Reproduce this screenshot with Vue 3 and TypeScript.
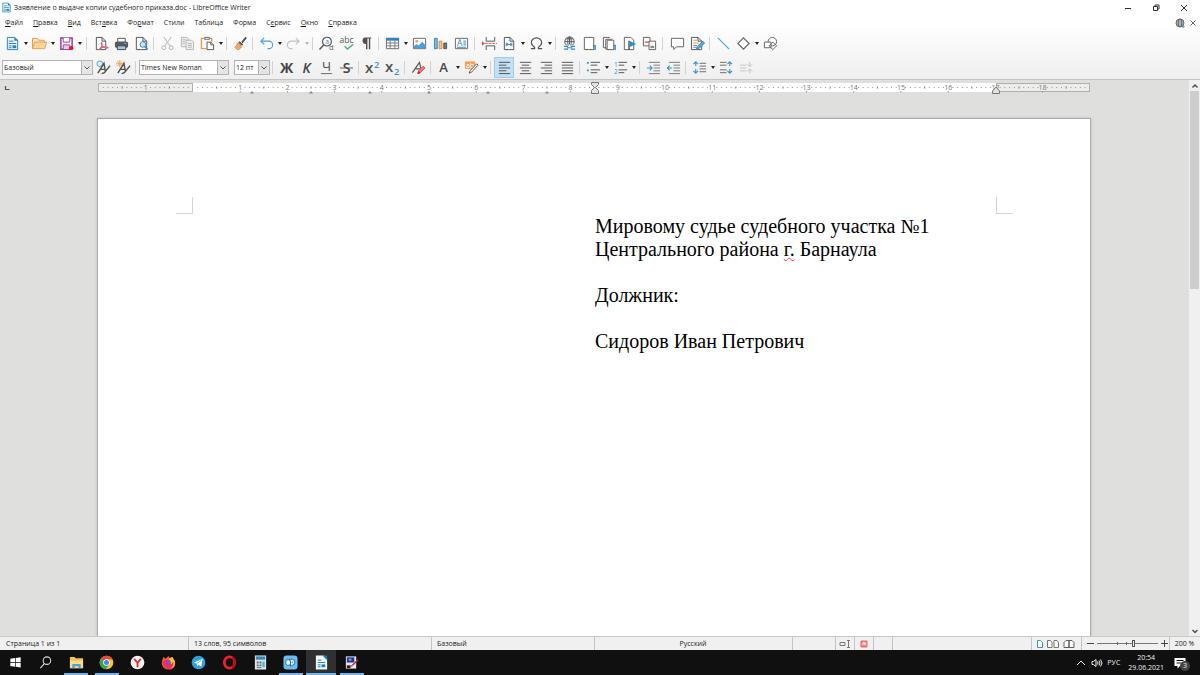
<script setup lang="ts">
import { ref } from 'vue'

interface Tool {
  icon: string
  label: string
  menu?: boolean
  active?: boolean
}
interface ToolGroup {
  tools: Tool[]
  wide?: boolean
  airy?: boolean
}

const menus: [string, string, string][] = [
  ['', 'Ф', 'айл'],
  ['', 'П', 'равка'],
  ['', 'В', 'ид'],
  ['Вст', 'а', 'вка'],
  ['Фо', 'р', 'мат'],
  ['Стили', '', ''],
  ['Таблица', '', ''],
  ['Форма', '', ''],
  ['С', 'е', 'рвис'],
  ['', 'О', 'кно'],
  ['', 'С', 'правка'],
]

const t = (icon: string, label: string, menu = false, active = false): Tool => ({ icon, label, menu, active })

const standardBar: ToolGroup[] = [
  { wide: true, tools: [t('doc', 'Создать', true), t('folder', 'Открыть', true), t('save', 'Сохранить', true)] },
  { tools: [t('pdf', 'Экспорт в PDF'), t('print', 'Печать'), t('preview', 'Просмотр печати')] },
  { tools: [t('cut', 'Вырезать'), t('copy', 'Копировать'), t('paste', 'Вставить', true)] },
  { tools: [t('brush', 'Копировать форматирование')] },
  { tools: [t('undo', 'Отменить', true), t('redo', 'Вернуть', true)] },
  { tools: [t('find', 'Найти и заменить'), t('spell', 'Орфография'), t('pilcrow', 'Непечатаемые знаки')] },
  { airy: true, wide: true, tools: [t('table', 'Вставить таблицу', true), t('image', 'Вставить изображение'), t('chart', 'Вставить диаграмму'), t('textbox', 'Вставить текстовое поле')] },
  { tools: [t('pagebreak', 'Разрыв страницы'), t('field', 'Вставить поле', true), t('omega', 'Специальные символы', true)] },
  { wide: true, tools: [t('link', 'Гиперссылка'), t('footnote', 'Сноска'), t('endnote', 'Концевая сноска'), t('bookmark', 'Закладка'), t('xref', 'Перекрёстная ссылка')] },
  { tools: [t('comment', 'Комментарий'), t('track', 'Отслеживать изменения')] },
  { tools: [t('line', 'Линия'), t('diamond', 'Фигуры', true), t('shapes', 'Показать функции рисования')] },
]

const formatBar: ToolGroup[] = [
  { tools: [t('bold', 'Полужирный'), t('italic', 'Курсив'), t('underline', 'Подчёркнутый'), t('strike', 'Зачёркнутый')] },
  { tools: [t('sup', 'Верхний индекс'), t('sub', 'Нижний индекс')] },
  { tools: [t('clear', 'Очистить форматирование')] },
  { tools: [t('color', 'Цвет шрифта', true), t('highlight', 'Цвет выделения', true)] },
  { airy: true, tools: [t('left', 'По левому краю', false, true), t('center', 'По центру'), t('right', 'По правому краю'), t('justify', 'По ширине')] },
  { tools: [t('bullets', 'Маркированный список', true), t('numbers', 'Нумерованный список', true)] },
  { tools: [t('indent', 'Увеличить отступ'), t('outdent', 'Уменьшить отступ')] },
  { tools: [t('spacing', 'Междустрочный интервал', true), t('parainc', 'Увеличить интервал'), t('paradec', 'Уменьшить интервал')] },
]

const page = (x: number, y: number, w: number, h: number, c = '#505050') =>
  `<path d="M${x} ${y}h${w - 4}l4 4v${h - 4}h${-w}z" fill="#fff" stroke="${c}"/><path d="M${x + w - 4} ${y}v4h4" fill="none" stroke="${c}"/>`
const rows = (list: [number, number, number][], c = '#505050') =>
  list.map(([x, y, w]) => `<path d="M${x} ${y}.5h${w}" stroke="${c}"/>`).join('')
const glyph = (s: string, extra = '') =>
  `<text x="8" y="13.5" text-anchor="middle" font-family="Open Sans, sans-serif" font-size="15" fill="#444" ${extra}>${s}</text>`

const icons: Record<string, string> = {
  doc: '<path d="M2.5 1.5h8l3 3v10h-11z" fill="#eaf4fb" stroke="#2b7fb8"/><path d="M10 1l4 4h-4z" fill="#2b7fb8"/><path d="M4 5.5h5M4 8h8M4 10.5h3M4 12.5h3" stroke="#2b7fb8"/><path d="M8 10h4v3H8z" fill="#2b7fb8"/>',
  folder: '<path d="M.5 13.5v-11h5l1.500 2h6v2" fill="#fbe3bd" stroke="#d69a4c"/><path d="M.5 13.5l2.500-7h12.500l-2 7z" fill="#fbd59a" stroke="#e0a050"/>',
  save: '<path d="M2 2h12v12H2z" fill="#fff" stroke="#9a3c9f" stroke-width="1.6"/><path d="M4.5 2v4.500h7V2" fill="#fff" stroke="#9a3c9f"/><path d="M4.500 14V9.500h7V14" fill="#e6cfe8" stroke="#9a3c9f"/><circle cx="13" cy="13" r="2.300" fill="#f01818"/>',
  pdf: page(2.5, 1.5, 10, 13) + '<path d="M5 14.500c3-2 4-5 3.500-7C8 6 7 7.500 8.500 10S13 13.500 15 12.500c-1-2-6-1-10 2z" fill="#fff" stroke="#e06470" stroke-width="1.200"/>',
  print: '<path d="M4 2.5h8v4H4z" fill="#fff" stroke="#555"/><rect x="1" y="6" width="14" height="6.500" rx="1.500" fill="#5a5a5a"/><path d="M3.5 10.5h9v4h-9z" fill="#9fcbea" stroke="#444"/><path d="M11 8h2" stroke="#7cc0ee"/>',
  preview: page(2.5, 1.5, 11, 13) + '<circle cx="9.500" cy="9" r="3" fill="#cce5f6" stroke="#2f86c0"/><path d="M11.500 11.500l3 3" stroke="#2f86c0" stroke-width="1.500"/>',
  cut: '<g fill="none" stroke="#b0b0b0"><path d="M4 1l7 10M12 1L5 11"/><circle cx="4" cy="12.500" r="2"/><circle cx="12" cy="12.500" r="2"/></g>',
  copy: '<g fill="#ececec" stroke="#b4b4b4"><path d="M1.5 1.5h6l2 2v8h-8z"/><path d="M6.5 4.5h6l2 2v8h-8z"/><path d="M8.5 8h4M8.5 10h4M8.5 12h4M3 4h3M3 6h2M3 8h2"/></g>',
  paste: '<path d="M5 2.5H1.5v11H7M10 2.5h2.500V6" fill="none" stroke="#e8a050" stroke-width="1.500"/><path d="M5 1.500h5v2H5z" fill="#fff" stroke="#666"/><path d="M7.500 6.500h4l3 3v5h-7z" fill="#fff" stroke="#555"/><path d="M11.500 6.500v3h3" fill="none" stroke="#555"/>',
  brush: '<path d="M14 1.5L9.5 7" stroke="#505050" stroke-width="2"/><path d="M7 5.5l4 3.500-1.500 1.500-4-3.500z" fill="#555"/><path d="M5 7.5l4 3.500c-.5 2-2 3.500-4.500 3.500L2 12c1.500-1 2.500-2.500 3-4.500z" fill="#f4a860" stroke="#dd8a3c"/>',
  undo: '<path d="M5.500 2L2 5.500 5.500 9M2 5.500h8.500a4 4 0 010 8H9" fill="none" stroke="#46a0d8" stroke-width="1.200"/>',
  redo: '<path d="M10.500 2L14 5.500 10.500 9M14 5.500H5.500a4 4 0 000 8H7" fill="none" stroke="#c0c0c0" stroke-width="1.200"/>',
  find: '<circle cx="8.500" cy="6" r="4.700" fill="#fff" stroke="#555" stroke-width="1.200"/><path d="M5 9.500L.5 14.500" stroke="#555" stroke-width="1.600"/><text x="8.500" y="8.500" text-anchor="middle" font-size="7" font-family="Open Sans, sans-serif" fill="#2f8fd0">a</text><text x="13" y="15" text-anchor="middle" font-size="8" font-family="Open Sans, sans-serif" fill="#555">d</text>',
  spell: '<text x="8" y="7" text-anchor="middle" font-size="9" font-family="Open Sans, sans-serif" fill="#555">abc</text><path d="M6 11l3 3 6-5" fill="none" stroke="#4caf70" stroke-width="1.500"/>',
  pilcrow: '<path d="M7 1.500h6v1.200h-1V14h-1.500V2.700H9V14H7.500V8.500a3.500 3.500 0 01-.5-7z" fill="#505050"/>',
  table: '<path d="M1.500 2.500h13v11h-13z" fill="#fff" stroke="#666"/><path d="M1 2h14v3H1z" fill="#2f86c0"/><path d="M1.500 7.500h13M1.500 10.500h13M5.500 5v8.500M10.500 5v8.500" stroke="#777"/>',
  image: '<path d="M1.500 2.500h13v11h-13z" fill="#fff" stroke="#666"/><circle cx="5" cy="5.800" r="1.500" fill="#f0a050"/><path d="M2 13v-2l3-2.500 2 1.500 4-4 3.500 4v3z" fill="#4d9fd8"/>',
  chart: '<path d="M1.500 2.500h3v11h-3z" fill="#79bce6" stroke="#2f86c0"/><path d="M6.500 5.500h3v8h-3z" fill="#f6c088" stroke="#dd8a3c"/><path d="M11.500 7.500h3v6h-3z" fill="#777" stroke="#505050"/>',
  textbox: '<path d="M1.500 2.500h13v11h-13z" fill="#fff" stroke="#666"/><text x="6" y="10.500" text-anchor="middle" font-size="9" font-family="Open Sans, sans-serif" fill="#2f86c0">A</text><path d="M10 5.500h3M10 7.500h3M10 9.500h3M3 12h10" stroke="#2f86c0"/>',
  pagebreak: '<path d="M4.500 1v4.500h9V1M4.500 15v-4.500h9V15" fill="none" stroke="#555"/><path d="M3 8h13" stroke="#ea6060" stroke-dasharray="3 1"/><path d="M0 5.500L3 8l-3 2.500z" fill="#ea4040"/>',
  field: page(2.5, 1.5, 10, 13) + '<path d="M4.500 7v4M10.500 7v4M5 9h5M6.500 7.500L5 9l1.500 1.500M8.500 7.500L10 9l-1.500 1.500" fill="none" stroke="#2f86c0"/>',
  omega: '<path d="M2 13.500h4v-1.500C3.500 10.500 2.500 9 2.500 7a5.500 5 0 0111 0c0 2-1 3.500-3.500 5v1.500h4" fill="none" stroke="#505050" stroke-width="1.200"/>',
  link: '<g fill="none" stroke="#555"><circle cx="8" cy="6" r="5"/><ellipse cx="8" cy="6" rx="2" ry="5"/><path d="M3 6h10M4 3h8M8 1v8"/></g><path d="M1 10h14v5H1z" fill="#f8f8f8"/><path d="M2 11h4.500M2 14h4.500M9.500 11H14M9.500 14H14M5 12.500h6" stroke="#2f8fd0" stroke-width="1.200"/>',
  footnote: '<path d="M2.500 1.500h10v13h-10z" fill="#fff" stroke="#606060"/><path d="M12 10.500h2V15" fill="none" stroke="#2f8fd0" stroke-width="1.600"/>',
  endnote: '<path d="M4.500 12.500h-3v-11h7M7 14H4V3.500h7" fill="none" stroke="#606060"/><path d="M5.500 4.500h7v10h-7z" fill="#fff" stroke="#606060"/><path d="M12 10h2v5" fill="none" stroke="#2f8fd0" stroke-width="1.600"/>',
  bookmark: '<path d="M2.500 1.500h7l3 3v10h-10z" fill="#fff" stroke="#606060"/><path d="M7.500 5v10" stroke="#505050" stroke-width="1.500"/><path d="M8 5l7 3.500L8 12z" fill="#2f8fd0"/>',
  xref: '<path d="M1.500 1.500h7v9h-7z" fill="#fff" stroke="#606060"/><path d="M7.500 5.500h7v9h-7z" fill="#fff" stroke="#606060"/><path d="M3 6.500h5" stroke="#e05a5a" stroke-width="1.500"/><path d="M9 10.500h4v2.500H9z" fill="#888"/>',
  comment: '<path d="M1.500 2.500h13v9H7l-3 3v-3H1.500z" fill="#fff" stroke="#606060"/>',
  track: page(1.5, 1.5, 11, 13) + '<path d="M3.500 4.500h5M3.500 7.500h6" stroke="#e8954e"/><path d="M3.500 10h4M3.500 12h3" stroke="#777"/><path d="M13.500 5.500l2 2-6 6-3 1 1-3z" fill="#58a8de" stroke="#2f86c0"/>',
  line: '<path d="M2 2l12 12" stroke="#46a0d8" stroke-width="1.200"/>',
  diamond: '<path d="M8 2l6 6-6 6-6-6z" fill="#fff" stroke="#606060" stroke-width="1.200"/>',
  shapes: '<g fill="#fff" stroke="#606060"><circle cx="10" cy="6" r="4.500"/><path d="M1.500 6.500h7v6h-7z"/><path d="M10.500 6.500l4 4-4 4-4-4z" fill="none"/></g>',
  bold: glyph('Ж', 'font-weight="700"'),
  italic: glyph('К', 'font-style="italic" font-weight="600"'),
  underline: '<text x="8" y="12" text-anchor="middle" font-family="Open Sans, sans-serif" font-size="14" fill="#505050">Ч</text><path d="M2 14.500h12" stroke="#666"/>',
  strike: glyph('S', 'font-weight="600"') + '<path d="M1 8.500h14" stroke="#555"/>',
  sup: '<text x="0" y="13.500" font-family="Open Sans, sans-serif" font-size="16" font-weight="600" fill="#505050">x</text><text x="9.500" y="8" font-family="Open Sans, sans-serif" font-size="10" font-weight="600" fill="#3b93cc">2</text>',
  sub: '<text x="0" y="12.500" font-family="Open Sans, sans-serif" font-size="16" font-weight="600" fill="#505050">x</text><text x="9.500" y="16" font-family="Open Sans, sans-serif" font-size="10" font-weight="600" fill="#3b93cc">2</text>',
  clear: '<path d="M1.500 13.500L9 2.500l2 8M5 9.500h5" fill="none" stroke="#555" stroke-width="1.300"/><path d="M13 6.500l2 2-5 5-2-2z" fill="#ee7a80" stroke="#d85058"/><path d="M8 11.500l2 2-1.500 1.500H7v-2z" fill="#e01818"/>',
  color: '<text x="7" y="12.500" text-anchor="middle" font-family="Open Sans, sans-serif" font-size="14" font-weight="600" fill="#444">A</text>',
  highlight: '<path d="M1 1.500h11v8H1z" fill="#f3a255"/><text x="6.500" y="8.500" text-anchor="middle" font-size="8" font-family="Open Sans, sans-serif" fill="#fff">ab</text><path d="M13.500 4l1.500 1.500-7 7.500-2.500 1 1-2.500z" fill="#fff" stroke="#505050"/>',
  left: rows([[2, 2, 12], [2, 5, 8], [2, 8, 12], [2, 11, 8], [2, 14, 12]]),
  center: rows([[2, 2, 12], [4, 5, 8], [2, 8, 12], [4, 11, 8], [2, 14, 12]]),
  right: rows([[2, 2, 12], [6, 5, 8], [2, 8, 12], [6, 11, 8], [2, 14, 12]]),
  justify: rows([[2, 2, 12], [2, 5, 12], [2, 8, 12], [2, 11, 12], [2, 14, 12]]),
  bullets: rows([[5, 2, 10], [5, 5, 7], [5, 10, 10], [5, 13, 7]]) + '<path d="M1 2h2v2H1zM1 10h2v2H1z" fill="#3b93cc"/>',
  numbers: rows([[6, 2, 9], [6, 5, 6], [6, 10, 9], [6, 13, 6]]) + '<text x="1" y="7" font-size="7" font-family="Open Sans, sans-serif" fill="#3b93cc">1</text><text x="1" y="15" font-size="7" font-family="Open Sans, sans-serif" fill="#3b93cc">2</text>',
  indent: rows([[3, 2, 12], [8, 5, 7], [8, 8, 7], [8, 11, 7], [3, 14, 12]], '#777') + '<path d="M1 8.500h5M4 6l2.500 2.500L4 11" fill="none" stroke="#3b93cc" stroke-width="1.200"/>',
  outdent: rows([[3, 2, 12], [8, 5, 7], [8, 8, 7], [8, 11, 7], [3, 14, 12]], '#777') + '<path d="M1.500 8.500h5M4 6L1.500 8.500 4 11" fill="none" stroke="#3b93cc" stroke-width="1.200"/>',
  spacing: rows([[8, 3, 7], [8, 6, 7], [8, 9, 7], [8, 12, 7]], '#666') + '<path d="M4 2v4.500M4 9.500V14M1.500 4.500L4 2l2.500 2.500M1.500 11.500L4 14l2.500-2.500" fill="none" stroke="#3b93cc" stroke-width="1.200"/>',
  parainc: rows([[1, 2, 7], [1, 5, 7], [1, 10, 7], [1, 13, 7]], '#666') + '<path d="M11.500 2v4.500M11.500 9.500V14M9 4.500L11.500 2 14 4.500M9 11.500l2.500 2.500 2.500-2.500" fill="none" stroke="#3b93cc" stroke-width="1.200"/>',
  paradec: rows([[1, 5, 7], [1, 8, 7], [1, 11, 7]], '#c4c4c4') + '<path d="M11.500 2v5M11.500 9.500V14M9 4.500L11.500 7 14 4.500M9 12l2.500-2.500L14 12" fill="none" stroke="#c0c0c0"/>',
}

const tasks: { icon: string; label: string; open?: boolean; active?: boolean }[] = [
  { icon: 'start', label: 'Пуск' },
  { icon: 'search', label: 'Поиск' },
  { icon: 'explorer', label: 'Проводник', open: true },
  { icon: 'chrome', label: 'Chrome', open: true },
  { icon: 'yandex', label: 'Яндекс' },
  { icon: 'firefox', label: 'Firefox' },
  { icon: 'telegram', label: 'Telegram' },
  { icon: 'opera', label: 'Opera' },
  { icon: 'calc', label: 'Калькулятор' },
  { icon: 'capture', label: 'Снимок', open: true },
  { icon: 'writer', label: 'Writer', open: true, active: true },
  { icon: 'paint', label: 'Редактор', open: true },
]

const taskIcons: Record<string, string> = {
  start: '<path d="M2.500 4l5-.7v4.200h-5zM8.200 3.200L13.500 2.500v5H8.200zM2.500 8.200h5v4.200l-5-.7zM8.200 8.200h5.300v5l-5.300-.7z" fill="#fff"/>',
  search: '<circle cx="9.500" cy="6" r="4" fill="none" stroke="#ddd" stroke-width="1.100"/><path d="M7 9l-4.500 5" stroke="#ddd" stroke-width="1.200"/>',
  explorer: '<path d="M1 2h5l1 1.500h8V14H1z" fill="#f5c453"/><path d="M1 6h14v8H1z" fill="#fbdc86"/><path d="M3.500 14V9.500h9V14h-2.500v-2H6v2z" fill="#4ba0e0"/>',
  chrome: '<circle cx="8" cy="8" r="7.300" fill="#f4c430"/><path d="M8 8L1.700 4.500A7.300 7.300 0 0114.500 4.700H8z" fill="#e04a3a"/><path d="M1.700 4.400A7.300 7.300 0 007.500 15.300L11 9.700 8 8z" fill="#35a552"/><circle cx="8" cy="8" r="3.500" fill="#fff"/><circle cx="8" cy="8" r="2.700" fill="#4585ee"/>',
  yandex: '<circle cx="8" cy="8" r="7.300" fill="#f2f2f2"/><path d="M4.500 4l3.500 4.500L11.500 4M8 8v5" fill="none" stroke="#e53030" stroke-width="2"/>',
  firefox: '<path d="M1.500 5l1-3 2.500 2 3-3 1 2.500 3-1.500 2.500 4c2 5-1 9.500-6.500 9.500S-.5 10 1.500 5z" fill="#f65a3c"/><path d="M8 .500l1 3 3-1.500 2.500 4c1 3 0 6-3 8z" fill="#fbc22e"/><path d="M1.500 7l3.500-2 4 1-2 2c2 3 5 2 6-1 1 5-2 8-5 8s-6.500-4-6.500-8z" fill="#f42c5d"/><circle cx="8" cy="8" r="2.500" fill="#7850c8"/>',
  telegram: '<circle cx="8" cy="8" r="7.300" fill="#2fa1dc"/><path d="M3 8l9.500-4-1.600 8.500L8 10.500l-1.500 1.600-.4-2.900z" fill="#fff"/><path d="M6.200 9.200L11 5.500" stroke="#2fa1dc" stroke-width=".8"/>',
  opera: '<ellipse cx="8" cy="8" rx="5.500" ry="6" fill="none" stroke="#f01f2d" stroke-width="3"/><path d="M10.500 2.500c4 2 4 9 0 11" fill="none" stroke="#b00c18" stroke-width="2"/>',
  calc: '<path d="M2 .500h12v15H2z" fill="#dfe6e8"/><path d="M3 1.500h10V5H3z" fill="#2f87b8"/><path d="M4 7h2v2H4zM7 7h2v2H7zM4 10h2v2H4zM7 10h2v2H7z" fill="#546b77"/><path d="M10 7h2.500v6H10z" fill="#58acd8"/><path d="M4 13h5v1H4z" fill="#546b77"/>',
  capture: '<rect x=".5" y=".5" width="15" height="15" rx="3.500" fill="#68bdf4"/><rect x="3" y="5" width="5" height="6" rx="2" fill="#e4f3fc" stroke="#35688a"/><path d="M7 4.500h3a3.300 3.300 0 010 6.500L8 12V7z" fill="#d6edfb" stroke="#35688a"/><circle cx="10" cy="7.700" r="1" fill="#68bdf4"/>',
  writer: '<path d="M2 .500h8.500L14 4v11.500H2z" fill="#f2f8fc"/><path d="M9 .500h5v5z" fill="#1580b8"/><path d="M4 5.500h4M4 8h8M4 10.500h3M4 12.500h3" stroke="#1580b8"/><path d="M8 10h4v3H8z" fill="#1580b8"/>',
  paint: '<path d="M2 1.500h11v13H2z" fill="#e8e8f2"/><path d="M3 2.500h8V8H3z" fill="#26348c"/><path d="M5 4h3v2H5z" fill="#8da0e0"/><path d="M3 11h4v3H3z" fill="#222"/><path d="M15 5l-6 6" stroke="#c02838" stroke-width="1.500"/><path d="M9 10l-3 2 3 .5z" fill="#e04050"/>',
}

/* Ruler geometry: one centimetre in ruler units, zero mark at the left margin. */
const cm = 47.2
const zero = 95
const dots = Array.from({ length: 210 }, (_, i) => i - 19)
  .filter((n) => n % 10 !== 0)
  .map((n) => ({ x: zero + (n * cm) / 10, half: n % 5 === 0 }))
  .filter((d) => d.x > 3 && d.x < 989)
const numbers = [-1, ...Array.from({ length: 18 }, (_, i) => i + 1)].map((n) => ({ x: zero + n * cm, n: Math.abs(n) }))
const tabs = [1, 2, 3, 4, 5, 6].map((n) => zero + n * 1.25 * cm)

const zoom = ref(60)
const styleName = ref('Базовый')
const fontName = ref('Times New Roman')
const fontSize = ref('12 пт')
</script>

<template>
  <div class="desktop">
    <header class="chrome">
      <div class="title-bar">
        <svg class="app-icon" viewBox="0 0 16 16" v-html="icons.doc"></svg>
        <h1>Заявление о выдаче копии судебного приказа.doc - LibreOffice Writer</h1>
        <div class="window-buttons">
          <button aria-label="Свернуть"><svg viewBox="0 0 10 10"><path d="M2 5.500h6" /></svg></button>
          <button aria-label="Восстановить"><svg viewBox="0 0 10 10"><path d="M2.500 3.500h4v4h-4zM4 3.500V2h4v4H6.500" /></svg></button>
          <button aria-label="Закрыть"><svg viewBox="0 0 10 10"><path d="M2 2l6 6M8 2l-6 6" /></svg></button>
        </div>
      </div>
      <nav class="menu-bar">
        <button v-for="m in menus" :key="m.join('')">{{ m[0] }}<u>{{ m[1] }}</u>{{ m[2] }}</button>
        <div class="menu-right">
          <button aria-label="Обновление">
            <svg viewBox="0 0 10 10"><circle cx="5" cy="5" r="4" /><ellipse cx="5" cy="5" rx="1.800" ry="4" /><path d="M1 5h8M1.500 3h7M1.500 7h7" /><path class="update" d="M8 6v3.500M6.500 8L8 9.500 9.500 8" /></svg>
          </button>
          <button aria-label="Закрыть документ"><svg viewBox="0 0 10 10"><path d="M2.500 2.500l5 5M7.500 2.500l-5 5" /></svg></button>
        </div>
      </nav>

      <div class="toolbar" role="toolbar" aria-label="Стандартная">
        <template v-for="(g, gi) in standardBar" :key="gi">
          <span v-if="gi" class="sep"></span>
          <div class="group" :class="{ wide: g.wide, airy: g.airy }">
            <template v-for="tool in g.tools" :key="tool.icon">
              <button class="tool" :aria-label="tool.label"><svg viewBox="0 0 16 16" v-html="icons[tool.icon]"></svg></button>
              <button v-if="tool.menu" class="caret" :class="{ off: tool.icon === 'redo' }" :aria-label="tool.label + ': меню'"></button>
            </template>
          </div>
        </template>
      </div>

      <div class="toolbar" role="toolbar" aria-label="Форматирование">
        <div class="group">
          <label class="combo style-combo">
            <select v-model="styleName" aria-label="Стиль абзаца"><option>Базовый</option></select>
            <svg viewBox="0 0 10 10"><path d="M2.500 4L5 6.500 7.500 4" /></svg>
          </label>
          <button class="tool" aria-label="Обновить стиль">
            <svg viewBox="0 0 16 16"><circle cx="4" cy="4" r="3" fill="#dff0fa" stroke="#46a0d8" /><path d="M2 14L8.500 3.500 10 12M5 10h5" fill="none" stroke="#505050" stroke-width="1.500" /><path d="M15 6l-6 7.500-3 1" fill="none" stroke="#505050" stroke-width="1.500" /></svg>
          </button>
          <button class="tool" aria-label="Создать стиль">
            <svg viewBox="0 0 16 16"><path d="M4 0v8M0 4h8M1 1l6 6M7 1L1 7" stroke="#f0a050" /><path d="M2 14L8.500 3.500 10 12M5 10h5" fill="none" stroke="#505050" stroke-width="1.500" /><path d="M15 6l-6 7.500-3 1" fill="none" stroke="#505050" stroke-width="1.500" /></svg>
          </button>
        </div>
        <span class="sep"></span>
        <div class="group fonts">
          <label class="combo font-combo">
            <select v-model="fontName" aria-label="Шрифт"><option>Times New Roman</option></select>
            <svg viewBox="0 0 10 10"><path d="M2.500 4L5 6.500 7.500 4" /></svg>
          </label>
          <label class="combo size-combo">
            <select v-model="fontSize" aria-label="Размер шрифта"><option>12 пт</option></select>
            <svg viewBox="0 0 10 10"><path d="M2.500 4L5 6.500 7.500 4" /></svg>
          </label>
        </div>
        <template v-for="(g, gi) in formatBar" :key="gi">
          <span class="sep"></span>
          <div class="group" :class="{ wide: g.wide, airy: g.airy }">
            <template v-for="tool in g.tools" :key="tool.icon">
              <button class="tool" :class="{ active: tool.active }" :aria-label="tool.label"><svg viewBox="0 0 16 16" v-html="icons[tool.icon]"></svg></button>
              <button v-if="tool.menu" class="caret" :aria-label="tool.label + ': меню'"></button>
            </template>
          </div>
        </template>
      </div>
    </header>

    <main class="workspace">
      <div class="canvas">
        <div class="ruler-row">
          <svg class="tab-kind" viewBox="0 0 8 8"><path d="M2.500 2v3.500h4" fill="none" stroke="#555" stroke-width="1.200" /></svg>
          <svg class="ruler" viewBox="0 0 992 14">
            <rect x="0" y="3" width="992" height="9" fill="#fff" />
            <rect x="0.500" y="3.500" width="94" height="8" fill="#ededec" stroke="#b0b0b0" />
            <rect x="898.500" y="3.500" width="93" height="8" fill="#ededec" stroke="#b0b0b0" />
            <path v-for="d in dots" :key="d.x" :d="d.half ? `M${d.x} 6.500v2` : `M${d.x} 7v1`" :stroke="d.half ? '#777' : '#999'" />
            <g v-for="n in numbers" :key="n.x">
              <text :x="n.x" y="9.500">{{ n.n }}</text>
              <path :d="`M${n.x} 11v1.500`" stroke="#999" />
            </g>
            <path v-for="x in tabs" :key="x" :d="`M${x - 2} 13.500l2-2.500 2 2.500z`" fill="#888" />
            <path d="M493.500 2.500h7v2l-3 3 3 3v3h-7v-3l3-3-3-3z" fill="#e4e4e4" stroke="#777" />
            <path d="M894.500 13.500v-2.500l3.500-4 3.500 4v2.500z" fill="#e4e4e4" stroke="#777" />
          </svg>
        </div>
        <article class="sheet">
          <div class="margins"><span class="corner left-corner"></span><span class="corner right-corner"></span></div>
          <div class="text">
            <p>Мировому судье судебного участка №1</p>
            <p>Центрального района <span class="typo">г.</span> Барнаула</p>
            <p><br /></p>
            <p>Должник:</p>
            <p><br /></p>
            <p>Сидоров Иван Петрович</p>
          </div>
        </article>
      </div>
      <div class="scrollbar">
        <button aria-label="Вверх"><svg viewBox="0 0 10 10"><path d="M2.500 6.500L5 4l2.500 2.500" /></svg></button>
        <div class="track"><div class="thumb"></div></div>
        <button aria-label="Вниз"><svg viewBox="0 0 10 10"><path d="M2.500 4L5 6.500 7.500 4" /></svg></button>
      </div>
    </main>

    <footer class="status-bar">
      <span>Страница 1 из 1</span>
      <span>13 слов, 95 символов</span>
      <span>Базовый</span>
      <span class="middle">Русский</span>
      <span></span>
      <span class="middle"><svg class="st" viewBox="0 0 12 10"><path d="M1 3.500h5v3H1zM8 1.500h3M8 8.500h3M9.500 1.500v7" fill="none" stroke="#777" /></svg></span>
      <span class="middle"><svg class="st" viewBox="0 0 12 10"><path d="M3 2h6v6H3z" fill="#f48a8a" stroke="#f06060" /><path d="M4.500 6l1.500-3 1 3 1-2" fill="none" stroke="#fff" /></svg></span>
      <span></span>
      <span></span>
      <span class="views">
        <button aria-label="Одна страница"><svg viewBox="0 0 6 8"><path d="M.5.500h3l2 2v5h-5z" fill="#fff" stroke="#3b93cc" /></svg></button>
        <button aria-label="Несколько страниц"><svg class="two" viewBox="0 0 12 8"><path d="M.5.500h3l1.500 2v5H.5zM7 .500h3l1.500 2v5H7z" fill="#fff" stroke="#777" /></svg></button>
        <button aria-label="Книга"><svg class="two" viewBox="0 0 12 8"><path d="M1 7.500v-5l2-2h3v7zM6 .500h3l2 2v5H6z" fill="#fff" stroke="#606060" /></svg></button>
      </span>
      <span class="zoom">
        <button aria-label="Уменьшить"><svg viewBox="0 0 7 7"><path d="M0 3.500h7" /></svg></button>
        <input v-model="zoom" type="range" min="0" max="100" aria-label="Масштаб" />
        <button aria-label="Увеличить"><svg viewBox="0 0 7 7"><path d="M0 3.500h7M3.500 0v7" /></svg></button>
      </span>
      <span class="middle">200 %</span>
    </footer>

    <div class="taskbar">
      <div class="tasks">
        <button v-for="k in tasks" :key="k.icon" :class="{ open: k.open, active: k.active }" :aria-label="k.label">
          <svg viewBox="0 0 16 16" v-html="taskIcons[k.icon]"></svg>
        </button>
      </div>
      <div class="tray">
        <button aria-label="Скрытые значки"><svg viewBox="0 0 12 12"><path d="M2 8l4-4 4 4" /></svg></button>
        <button aria-label="Громкость"><svg viewBox="0 0 12 12"><path d="M1 4.500h1.500L5 2.500v7L2.500 7.500H1zM6.500 4.500q1 1.500 0 3M8 3.500q2 2.500 0 5M9.500 2.500q3 3.500 0 7" /></svg></button>
        <button>РУС</button>
        <time datetime="2021-06-29T20:54"><span>20:54</span><span>29.06.2021</span></time>
        <button class="notify" aria-label="Уведомления: 3">
          <svg viewBox="0 0 12 12"><path d="M0.500 1h11v8H6l-2.500 2.500V9h-3z" fill="#fff" stroke="none" /><path d="M2.500 3.500h7M2.500 6h5" stroke="#111" /></svg>
          <span class="badge">3</span>
        </button>
      </div>
    </div>
  </div>
</template>

<style>
body {
  margin: 0;
  overflow: hidden;
}
</style>

<style scoped>
.desktop {
  height: 100vh;
  display: flex;
  flex-direction: column;
  font: 7px/10px 'Open Sans', 'Noto Sans', sans-serif;
  color: #1c1c1c;
  background: #dfdfde;
}
button {
  font: inherit;
  color: inherit;
  background: none;
  border: 0;
  padding: 0;
  margin: 0;
  display: flex;
  align-items: center;
  justify-content: center;
}
svg {
  display: block;
  flex: none;
  overflow: visible;
}
.chrome {
  flex: none;
  background: linear-gradient(#fff 30%, #efefef);
  border-bottom: 1px solid #c4c4c4;
}
.title-bar {
  display: flex;
  align-items: center;
  height: 15px;
  padding: 0 11px 0 1px;
}
.app-icon {
  width: 11px;
  height: 11px;
}
h1 {
  margin: 0 auto 0 2px;
  font-size: 7px;
  font-weight: 400;
}
.window-buttons {
  display: flex;
  gap: 18px;
}
.window-buttons svg,
.menu-right svg {
  width: 10px;
  height: 10px;
  fill: none;
  stroke: #333;
}
.menu-right svg {
  stroke: #666;
}
.menu-right .update {
  stroke: #3b93cc;
}
.menu-bar {
  display: flex;
  align-items: center;
  gap: 10px;
  height: 16px;
  padding: 0 2px 0 5px;
}
.menu-bar > button {
  display: block;
  white-space: nowrap;
}
.menu-right {
  display: flex;
  gap: 3px;
  margin-left: auto;
}
.toolbar {
  display: flex;
  align-items: center;
  height: 24px;
  padding-left: 2px;
}
.group {
  display: flex;
  align-items: center;
}
.group.airy .tool + .tool {
  margin-left: 1px;
}
.group.wide + .sep {
  margin-right: 4px;
  margin-left: 3px;
}
.sep {
  width: 1px;
  height: 13px;
  margin: 0 3px 0 2px;
  background: #d2d2d2;
}
.tool {
  width: 20px;
  height: 21px;
}
.tool svg {
  width: 15px;
  height: 15px;
}
.tool.active {
  background: #c5e0f5;
  box-shadow: inset 0 0 0 1px #9fcbed;
}
.caret {
  width: 7px;
  height: 21px;
}
.caret::after {
  content: '';
  border: 2px solid transparent;
  border-top: 3px solid #222;
  border-bottom: 0;
}
.caret.off::after {
  border-top-color: #b8b8b8;
}
.combo {
  display: flex;
  height: 15px;
  box-sizing: border-box;
  border: 1px solid #b4b4b4;
  background: #fff;
}
.combo select {
  flex: 1;
  min-width: 0;
  height: 13px;
  appearance: none;
  border: 0;
  padding: 2px 1px 0;
  background: none;
  color: inherit;
  font: inherit;
}
.combo svg {
  width: 10px;
  height: 13px;
  background: #e4e4e4;
  border-left: 1px solid #b4b4b4;
  fill: none;
  stroke: #555;
}
.style-combo {
  width: 91px;
}
.font-combo {
  width: 90px;
}
.size-combo {
  width: 36px;
}
.fonts {
  gap: 5px;
}
.workspace {
  flex: 1;
  min-height: 0;
  display: flex;
}
.canvas {
  flex: 1;
  min-width: 0;
  display: flex;
  flex-direction: column;
  overflow: hidden;
}
.ruler-row {
  display: grid;
  grid-template-columns: 98px 1fr 99px;
  height: 38px;
  align-items: start;
}
.tab-kind {
  width: 8px;
  height: 8px;
  margin: 4px 0 0 3px;
}
.ruler {
  width: 100%;
}
.ruler text {
  font-size: 7px;
  text-anchor: middle;
  fill: #777;
}
.sheet {
  flex: 1;
  min-height: 0;
  margin: 0 98px 0 97px;
  border: 1px solid #aaa;
  border-bottom: 0;
  background: #fff;
  box-shadow: 0 0 3px #bbb;
}
.margins {
  display: flex;
  justify-content: space-between;
  padding: 78px 77px 0 78px;
}
.corner {
  width: 16px;
  height: 16px;
  border-bottom: 1px solid #d4d4d4;
}
.left-corner {
  border-right: 1px solid #d4d4d4;
}
.right-corner {
  border-left: 1px solid #d4d4d4;
}
.text {
  margin-left: 50%;
  padding: 1px 0 0 1px;
  font: 20px/23px 'Liberation Serif', 'Times New Roman', serif;
  color: #000;
}
.text p {
  margin: 0;
}
.typo {
  text-decoration: underline wavy #f04040 1px;
  text-decoration-skip-ink: none;
}
.scrollbar {
  width: 11px;
  display: flex;
  flex-direction: column;
  background: #f0f0f0;
}
.scrollbar button {
  height: 11px;
}
.scrollbar svg {
  width: 10px;
  height: 10px;
  fill: none;
  stroke: #505050;
  stroke-width: 1.5;
}
.track {
  flex: 1;
}
.thumb {
  height: 37%;
  margin: 0 1px;
  background: #cdcdcd;
}
.status-bar {
  flex: none;
  display: grid;
  grid-template-columns: 188fr 243fr 163fr 198fr 43px 19px 19px 19px 139fr 50px 88px 31px;
  height: 13px;
  border-top: 1px solid #c8c8c8;
  background: #f0f0f0;
}
.status-bar > span {
  display: flex;
  align-items: center;
  padding-left: 6px;
  min-width: 0;
  white-space: nowrap;
}
.status-bar > span + span {
  box-shadow: inset 1px 0 #c4c4c4;
}
.status-bar > .middle {
  justify-content: center;
  padding: 0;
}
.st {
  width: 12px;
  height: 10px;
}
.views {
  gap: 4px;
}
.views svg {
  width: 6px;
  height: 8px;
}
.views .two {
  width: 12px;
}
.zoom {
  gap: 3px;
}
.zoom svg {
  width: 7px;
  height: 7px;
  stroke: #444;
}
.zoom input {
  width: 61px;
  height: 9px;
  margin: 0;
  appearance: none;
  background:
    linear-gradient(#666, #666) 20px 50% / 1px 3px no-repeat,
    linear-gradient(#666, #666) 29px 50% / 1px 3px no-repeat,
    linear-gradient(#777, #777) 0 50% / 100% 1px no-repeat;
}
.zoom input::-webkit-slider-thumb {
  appearance: none;
  width: 3px;
  height: 7px;
  box-sizing: border-box;
  border: 1px solid #555;
  background: #eee;
}
.taskbar {
  flex: none;
  display: flex;
  justify-content: space-between;
  height: 25px;
  background: #101010;
  color: #eee;
}
.tasks {
  display: flex;
  justify-content: space-between;
  width: 367px;
}
.tasks button {
  width: 30px;
  box-sizing: border-box;
  position: relative;
}
.tasks svg {
  width: 15px;
  height: 15px;
}
.tasks .open::after {
  content: '';
  position: absolute;
  inset: auto 3px 0;
  height: 2px;
  background: #6fb4ea;
}
.tasks .active {
  background: #303030;
}
.tasks .active::after {
  inset: auto 0 0;
}
.tray {
  display: flex;
  align-items: center;
  gap: 4px;
  padding-right: 14px;
}
.tray svg {
  width: 12px;
  height: 12px;
  fill: none;
  stroke: #eee;
}
.tray time {
  display: flex;
  flex-direction: column;
  align-items: center;
  margin: 0 6px 0 4px;
}
.notify {
  position: relative;
}
.badge {
  position: absolute;
  left: 6px;
  top: 4px;
  width: 10px;
  height: 10px;
  border-radius: 50%;
  background: #444;
}
</style>
